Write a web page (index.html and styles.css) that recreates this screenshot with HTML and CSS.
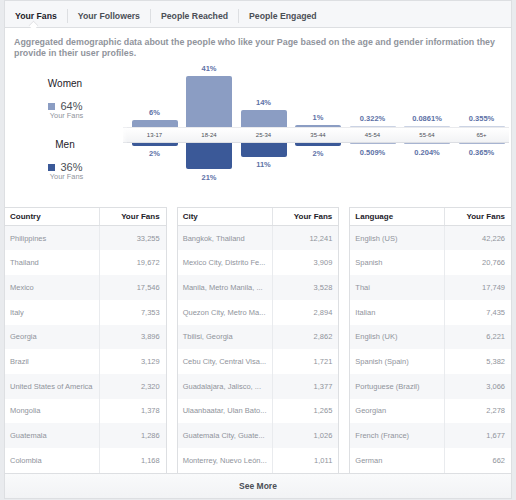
FILE: index.html
```html
<!DOCTYPE html>
<html>
<head>
<meta charset="utf-8">
<link rel="stylesheet" href="styles.css">
</head>
<body>
<div class="card">
  <div class="tabs">
    <div class="tab active">Your Fans<span class="caret"></span></div>
    <div class="sep"></div>
    <div class="tab">Your Followers</div>
    <div class="sep"></div>
    <div class="tab">People Reached</div>
    <div class="sep"></div>
    <div class="tab">People Engaged</div>
  </div>
  <p class="desc">Aggregated demographic data about the people who like your Page based on the age and gender information they provide in their user profiles.</p>
  <div class="chart">
    <div class="legend">
      <div class="gender women-title">Women</div>
      <div class="share"><span class="sq sq-w"></span>64%</div>
      <div class="sub">Your Fans</div>
      <div class="gender men-title">Men</div>
      <div class="share"><span class="sq sq-m"></span>36%</div>
      <div class="sub">Your Fans</div>
    </div>
    <div class="bars">
      <div class="band-lead"></div>
      <div class="age">
        <div class="top"><span class="pct">6%</span><div class="bar w" style="height:7.4px"></div></div>
        <div class="band">13-17</div>
        <div class="bottom"><div class="bar m" style="height:2.5px"></div><span class="pct">2%</span></div>
      </div>
      <div class="age">
        <div class="top"><span class="pct">41%</span><div class="bar w" style="height:50.8px"></div></div>
        <div class="band">18-24</div>
        <div class="bottom"><div class="bar m" style="height:26px"></div><span class="pct">21%</span></div>
      </div>
      <div class="age">
        <div class="top"><span class="pct">14%</span><div class="bar w" style="height:17.4px"></div></div>
        <div class="band">25-34</div>
        <div class="bottom"><div class="bar m" style="height:13.6px"></div><span class="pct">11%</span></div>
      </div>
      <div class="age">
        <div class="top"><span class="pct">1%</span><div class="bar w" style="height:1.6px"></div></div>
        <div class="band">35-44</div>
        <div class="bottom"><div class="bar m" style="height:2.5px"></div><span class="pct">2%</span></div>
      </div>
      <div class="age">
        <div class="top"><span class="pct">0.322%</span><div class="bar w thin"></div></div>
        <div class="band">45-54</div>
        <div class="bottom"><div class="bar m thin"></div><span class="pct">0.509%</span></div>
      </div>
      <div class="age">
        <div class="top"><span class="pct">0.0861%</span><div class="bar w thin"></div></div>
        <div class="band">55-64</div>
        <div class="bottom"><div class="bar m thin"></div><span class="pct">0.204%</span></div>
      </div>
      <div class="age">
        <div class="top"><span class="pct">0.355%</span><div class="bar w thin"></div></div>
        <div class="band">65+</div>
        <div class="bottom"><div class="bar m thin"></div><span class="pct">0.365%</span></div>
      </div>
    </div>
  </div>
  <div class="tables">
    <div class="tbl">
      <div class="tr th"><div class="c">Country</div><div class="c n">Your Fans</div></div>
      <div class="tr"><div class="c">Philippines</div><div class="c n">33,255</div></div>
      <div class="tr"><div class="c">Thailand</div><div class="c n">19,672</div></div>
      <div class="tr"><div class="c">Mexico</div><div class="c n">17,546</div></div>
      <div class="tr"><div class="c">Italy</div><div class="c n">7,353</div></div>
      <div class="tr"><div class="c">Georgia</div><div class="c n">3,896</div></div>
      <div class="tr"><div class="c">Brazil</div><div class="c n">3,129</div></div>
      <div class="tr"><div class="c">United States of America</div><div class="c n">2,320</div></div>
      <div class="tr"><div class="c">Mongolia</div><div class="c n">1,378</div></div>
      <div class="tr"><div class="c">Guatemala</div><div class="c n">1,286</div></div>
      <div class="tr"><div class="c">Colombia</div><div class="c n">1,168</div></div>
    </div>
    <div class="tbl">
      <div class="tr th"><div class="c">City</div><div class="c n">Your Fans</div></div>
      <div class="tr"><div class="c">Bangkok, Thailand</div><div class="c n">12,241</div></div>
      <div class="tr"><div class="c">Mexico City, Distrito Fe...</div><div class="c n">3,909</div></div>
      <div class="tr"><div class="c">Manila, Metro Manila, ...</div><div class="c n">3,528</div></div>
      <div class="tr"><div class="c">Quezon City, Metro Ma...</div><div class="c n">2,894</div></div>
      <div class="tr"><div class="c">Tbilisi, Georgia</div><div class="c n">2,862</div></div>
      <div class="tr"><div class="c">Cebu City, Central Visa...</div><div class="c n">1,721</div></div>
      <div class="tr"><div class="c">Guadalajara, Jalisco, ...</div><div class="c n">1,377</div></div>
      <div class="tr"><div class="c">Ulaanbaatar, Ulan Bato...</div><div class="c n">1,265</div></div>
      <div class="tr"><div class="c">Guatemala City, Guate...</div><div class="c n">1,026</div></div>
      <div class="tr"><div class="c">Monterrey, Nuevo León...</div><div class="c n">1,011</div></div>
    </div>
    <div class="tbl">
      <div class="tr th"><div class="c">Language</div><div class="c n">Your Fans</div></div>
      <div class="tr"><div class="c">English (US)</div><div class="c n">42,226</div></div>
      <div class="tr"><div class="c">Spanish</div><div class="c n">20,766</div></div>
      <div class="tr"><div class="c">Thai</div><div class="c n">17,749</div></div>
      <div class="tr"><div class="c">Italian</div><div class="c n">7,435</div></div>
      <div class="tr"><div class="c">English (UK)</div><div class="c n">6,221</div></div>
      <div class="tr"><div class="c">Spanish (Spain)</div><div class="c n">5,382</div></div>
      <div class="tr"><div class="c">Portuguese (Brazil)</div><div class="c n">3,066</div></div>
      <div class="tr"><div class="c">Georgian</div><div class="c n">2,278</div></div>
      <div class="tr"><div class="c">French (France)</div><div class="c n">1,677</div></div>
      <div class="tr"><div class="c">German</div><div class="c n">662</div></div>
    </div>
  </div>
  <div class="more">See More</div>
</div>
</body>
</html>
```

FILE: styles.css
```css
* { box-sizing: border-box; }
html, body { margin: 0; padding: 0; }
body {
  background: #e9ebee;
  font-family: "Liberation Sans", Arial, Helvetica, sans-serif;
  padding: 0 4px;
  width: 516px;
}
.card {
  background: #fff;
  border: 1px solid #dddfe2;
  width: 508px;
}
.tabs {
  display: flex;
  align-items: center;
  height: 27px;
  padding-top: 3px;
  background: #f6f7f9;
  border-bottom: 1px solid #dddfe2;
}
.tab {
  position: relative;
  padding: 0 10px;
  font-size: 8.7px;
  font-weight: bold;
  color: #4b4f56;
  line-height: 12px;
}
.tab.active { color: #1d2129; }
.caret {
  position: absolute;
  left: 50%;
  bottom: -8px;
  width: 9px;
  height: 9px;
  margin-left: -7px;
  background: #fff;
  border-left: 1px solid #dddfe2;
  border-top: 1px solid #dddfe2;
  transform: rotate(45deg) scale(0.75);
}
.sep {
  width: 1px;
  height: 14px;
  background: #dddfe2;
}
.desc {
  margin: 0;
  padding: 9.4px 4px 0 9px;
  font-size: 8.87px;
  line-height: 10.7px;
  font-weight: bold;
  color: #90949c;
}
.chart {
  display: grid;
  grid-template-columns: 118px 386px;
  height: 148px;
}
.legend {
  margin-left: 30px;
  width: 60px;
  display: flex;
  flex-direction: column;
  align-items: center;
  text-align: center;
}
.gender {
  font-size: 10px;
  line-height: 12px;
  color: #1d2129;
}
.women-title { margin-top: 19.3px; }
.men-title { margin-top: 19px; }
.share {
  display: flex;
  align-items: center;
  margin-top: 9.8px;
  font-size: 11px;
  line-height: 12px;
  color: #4b4f56;
  margin-left: 1px;
}
.men-title + .share { margin-top: 10.3px; }
.sq {
  display: inline-block;
  width: 7px;
  height: 7px;
  margin-right: 5px;
  margin-top: 1px;
}
.sq-w { background: #8b9dc3; }
.sq-m { background: #3b5998; }
.sub {
  font-size: 7.4px;
  line-height: 8px;
  color: #90949c;
  margin-left: 3px;
}
.bars {
  display: grid;
  grid-template-columns: 4.25px repeat(7, 54.5px);
  grid-template-rows: 68.25px 16px 1fr;
}
.band-lead {
  grid-row: 2;
  grid-column: 1;
  background: linear-gradient(90deg, rgba(255,255,255,0.6), rgba(255,255,255,0)), linear-gradient(#ffffff, #f2f3f5);
  border-top: 1px solid #eeeff2;
  border-bottom: 1px solid #e4e6ea;
}
.age {
  display: grid;
  grid-row: 1 / 4;
  grid-template-rows: subgrid;
}
.top, .bottom {
  display: flex;
  flex-direction: column;
  align-items: center;
}
.top { justify-content: flex-end; }
.bottom { justify-content: flex-start; }
.pct {
  font-size: 7.5px;
  line-height: 9px;
  font-weight: bold;
  color: #5d71a6;
}
.top .pct { margin-bottom: 3px; }
.bottom .pct { margin-top: 3.5px; }
.bar { width: 46px; }
.bar.w {
  background: #8b9dc3;
  border-radius: 2px 2px 0 0;
}
.bar.m {
  background: #3b5998;
  border-radius: 0 0 2px 2px;
}
.bar.thin { height: 1px; opacity: 0.45; }
.band {
  display: flex;
  align-items: center;
  justify-content: center;
  font-size: 6px;
  color: #4b4f56;
  background: linear-gradient(#ffffff, #f2f3f5);
  border-top: 1px solid #e9eaed;
  border-bottom: 1px solid #dcdee3;
}
.tables {
  display: grid;
  grid-template-columns: repeat(3, 1fr);
  column-gap: 10px;
  margin: 0 -1px;
}
.tbl {
  border: 1px solid #dddfe2;
  border-bottom: 0;
}
.tr {
  display: grid;
  grid-template-columns: 94px 1fr;
  height: 24.7px;
}
.tr:nth-child(even) { background: #f6f7f9; }
.tr.th {
  height: 18px;
  border-bottom: 1px solid #dddfe2;
  box-shadow: 0 1px 1px rgba(0, 0, 0, 0.04);
}
.c {
  display: flex;
  align-items: center;
  padding: 0 6px 0 5px;
  font-size: 7.5px;
  color: #90949c;
  white-space: nowrap;
  overflow: hidden;
}
.c.n {
  justify-content: flex-end;
  border-left: 1px solid #e9ebee;
}
.th .c {
  font-size: 8px;
  font-weight: bold;
  color: #1d2129;
}
.th .c.n { border-left-color: #e3e5e8; }
.more {
  height: 25px;
  border-top: 1px solid #dddfe2;
  background: linear-gradient(#f9fafb, #f2f3f5);
  display: flex;
  align-items: center;
  justify-content: center;
  font-size: 8.5px;
  font-weight: bold;
  color: #4b4f56;
}
```
